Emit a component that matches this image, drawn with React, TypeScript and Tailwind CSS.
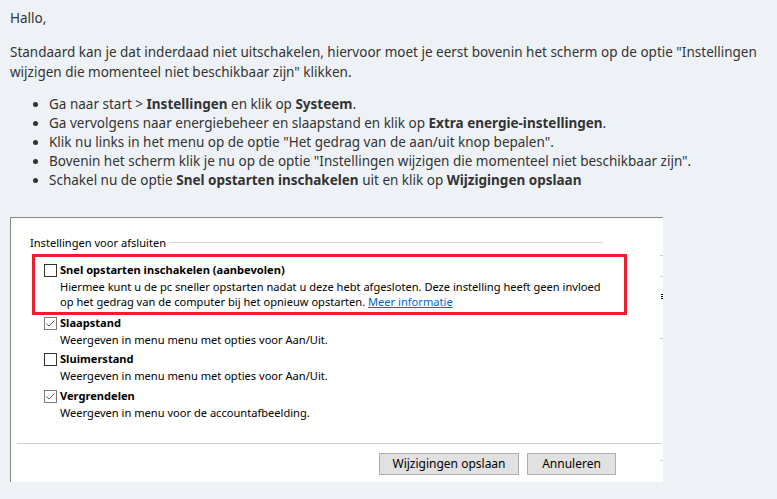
import React from "react";

function CheckBox({ checked }: { checked?: boolean }) {
  return (
    <span
      className={`mt-[1.5px] flex h-[13px] w-[13px] shrink-0 items-center justify-center border bg-white ${
        checked ? "border-[#7a7a7a]" : "border-[#333]"
      }`}
    >
      {checked && (
        <svg width="11" height="11" viewBox="0 0 11 11" fill="none">
          <path d="M1.5 5.5 L4 8 L9.5 2.5" stroke="#5f5f5f" strokeWidth="1" />
        </svg>
      )}
    </span>
  );
}

function Option({
  label,
  checked,
  children,
}: {
  label: string;
  checked?: boolean;
  children: React.ReactNode;
}) {
  return (
    <div className="flex gap-[3px]">
      <CheckBox checked={checked} />
      <div>
        <div className="font-bold leading-[15px]">{label}</div>
        <div className="mt-[2px] leading-[15px]">{children}</div>
      </div>
    </div>
  );
}

export default function App() {
  return (
    <main className="min-h-screen bg-[#eef2f6] pt-[8px] text-[13.5px] text-[#333] font-[family-name:'Noto_Sans',sans-serif]">
      <p className="px-[10px] leading-[20px]">Hallo,</p>
      <p className="mt-[14px] px-[10px] leading-[20px]">
        Standaard kan je dat inderdaad niet uitschakelen, hiervoor moet je eerst bovenin het scherm op de optie "Instellingen
        wijzigen die momenteel niet beschikbaar zijn" klikken.
      </p>
      <ul className="mt-[13px] list-disc pl-[49px] leading-[19px]">
        <li>
          Ga naar start &gt; <b>Instellingen</b> en klik op <b>Systeem</b>.
        </li>
        <li>
          Ga vervolgens naar energiebeheer en slaapstand en klik op <b>Extra energie-instellingen</b>.
        </li>
        <li>Klik nu links in het menu op de optie "Het gedrag van de aan/uit knop bepalen".</li>
        <li>Bovenin het scherm klik je nu op de optie "Instellingen wijzigen die momenteel niet beschikbaar zijn".</li>
        <li>
          Schakel nu de optie <b>Snel opstarten inschakelen</b> uit en klik op <b>Wijzigingen opslaan</b>
        </li>
      </ul>

      <div className="relative mt-[27px] ml-[10px] h-[265px] w-[653px] border-l border-t border-[#858585] bg-white text-[11.1px] text-black font-[family-name:'Segoe_UI','Noto_Sans',sans-serif]">
        <div className="flex items-center gap-[3px] pt-[17px] pl-[19px] pr-[60px]">
          <span className="leading-[15px]">Instellingen voor afsluiten</span>
          <span className="h-px flex-1 bg-[#d4d4d4]" />
        </div>

        <div className="mt-[4px] ml-[21px] w-[595px] border-[3px] border-[#e8202e] pt-[5px] pb-[2.5px] pl-[9px]">
          <Option label="Snel opstarten inschakelen (aanbevolen)">
            Hiermee kunt u de pc sneller opstarten nadat u deze hebt afgesloten. Deze instelling heeft geen invloed
            <br />
            op het gedrag van de computer bij het opnieuw opstarten.{" "}
            <a className="text-[#0066cc] underline">Meer informatie</a>
          </Option>
        </div>

        <div className="pl-[33px]">
          <div className="mt-[0.5px]">
            <Option label="Slaapstand" checked>
              Weergeven in menu menu met opties voor Aan/Uit.
            </Option>
          </div>
          <div className="mt-[4px]">
            <Option label="Sluimerstand">Weergeven in menu menu met opties voor Aan/Uit.</Option>
          </div>
          <div className="mt-[5px]">
            <Option label="Vergrendelen" checked>
              Weergeven in menu voor de accountafbeelding.
            </Option>
          </div>
        </div>

        <div className="mt-[23px] ml-[6px] mr-[2px] h-px bg-[#cfcfcf]" />

        <div className="mt-[9px] flex justify-end gap-[8px] pr-[47px]">
          <button className="h-[22px] w-[140px] border border-[#adadad] bg-[#e1e1e1] text-[12px] leading-[20px]">
            Wijzigingen opslaan
          </button>
          <button className="h-[22px] w-[89px] border border-[#adadad] bg-[#e1e1e1] text-[12px] leading-[20px]">
            Annuleren
          </button>
        </div>

        {/* cropped edges of the original window */}
        <span className="absolute right-0 top-[37px] h-px w-[3px] bg-[#cfcfcf]" />
        <span className="absolute right-0 top-[58px] h-px w-[3px] bg-[#cfcfcf]" />
        <span className="absolute right-0 top-[76px] flex w-[2px] flex-col gap-[1px]">
          <span className="h-px bg-black" />
          <span className="h-px bg-black" />
          <span className="h-px bg-black" />
        </span>
        <span className="absolute right-0 top-[120px] h-px w-[3px] bg-[#cfcfcf]" />
        <span className="absolute right-0 top-[242px] h-px w-[3px] bg-[#cfcfcf]" />
      </div>
    </main>
  );
}
